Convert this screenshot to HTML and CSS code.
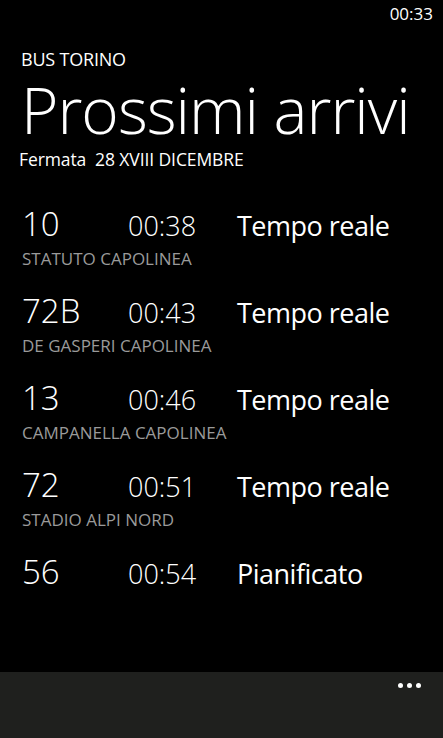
FILE: index.html
```html
<!DOCTYPE html>
<html lang="it">
<head>
  <meta charset="UTF-8" />
  <meta name="viewport" content="width=device-width, initial-scale=1.0" />
  <title>Bus Torino - Prossimi arrivi</title>
  <link rel="stylesheet" href="styles.css">
</head>
<body>
  <div class="phone">
    <!-- Status bar -->
    <div class="status-bar">
      <span class="clock">00:33</span>
    </div>

    <div class="page">
      <div class="header">
        <div class="app-name">BUS TORINO</div>
        <h1 class="page-title">Prossimi arrivi</h1>
        <div class="stop-name">Fermata&nbsp; 28 XVIII DICEMBRE</div>
      </div>

      <!-- Arrivals list -->
      <ul class="arrivals">
        <li class="arrival">
          <div class="arrival-line">
            <span class="line-number">10</span>
            <span class="arrival-time">00:38</span>
            <span class="arrival-kind">Tempo reale</span>
          </div>
          <div class="arrival-dest">STATUTO CAPOLINEA</div>
        </li>
        <li class="arrival">
          <div class="arrival-line">
            <span class="line-number">72B</span>
            <span class="arrival-time">00:43</span>
            <span class="arrival-kind">Tempo reale</span>
          </div>
          <div class="arrival-dest">DE GASPERI CAPOLINEA</div>
        </li>
        <li class="arrival">
          <div class="arrival-line">
            <span class="line-number">13</span>
            <span class="arrival-time">00:46</span>
            <span class="arrival-kind">Tempo reale</span>
          </div>
          <div class="arrival-dest">CAMPANELLA CAPOLINEA</div>
        </li>
        <li class="arrival">
          <div class="arrival-line">
            <span class="line-number">72</span>
            <span class="arrival-time">00:51</span>
            <span class="arrival-kind">Tempo reale</span>
          </div>
          <div class="arrival-dest">STADIO ALPI NORD</div>
        </li>
        <li class="arrival">
          <div class="arrival-line">
            <span class="line-number">56</span>
            <span class="arrival-time">00:54</span>
            <span class="arrival-kind">Pianificato</span>
          </div>
        </li>
      </ul>
    </div>

    <!-- Application bar -->
    <div class="app-bar">
      <div class="more">
        <span class="dot"></span>
        <span class="dot"></span>
        <span class="dot"></span>
      </div>
    </div>
  </div>
</body>
</html>
```

FILE: styles.css
```css
/* Global */
html, body {
  margin: 0;
  padding: 0;
  background: #000;
}

body {
  font-family: 'Open Sans', 'Noto Sans', sans-serif;
  color: #fff;
}

.phone {
  display: flex;
  flex-direction: column;
  height: 738px;
  overflow: hidden;
}

/* Status bar */
.status-bar {
  height: 28px;
  display: flex;
  justify-content: flex-end;
  align-items: center;
  padding-right: 10px;
}

.clock {
  font-size: 17px;
  line-height: 28px;
}

/* Page */
.page {
  flex: 1;
}

.header {
  padding-left: 21px;
  margin-top: 20px;
}

.app-name {
  font-size: 18px;
  line-height: 22px;
  letter-spacing: -0.2px;
}

.page-title {
  margin: 9px 0 0 0;
  font-size: 64px;
  font-weight: 300;
  line-height: 62px;
  letter-spacing: -1px;
}

.stop-name {
  margin-top: 7px;
  margin-left: -2px;
  font-size: 17.5px;
  line-height: 22px;
  letter-spacing: -0.1px;
}

/* Arrivals */
.arrivals {
  list-style: none;
  margin: 0;
  padding: 34px 0 0 22px;
}

.arrival {
  margin-bottom: 22px;
}

.arrival-line {
  display: grid;
  grid-template-columns: 106px 109px 1fr;
  align-items: baseline;
  line-height: 40px;
}

.line-number {
  font-size: 33px;
  font-weight: 300;
}

.arrival-time {
  font-size: 27px;
  font-weight: 300;
}

.arrival-kind {
  font-size: 27px;
  letter-spacing: -0.5px;
}

.arrival-dest {
  margin-top: 3px;
  font-size: 17px;
  line-height: 20px;
  color: #9a9a9a;
}

/* App bar */
.app-bar {
  height: 66px;
  background-color: #1f201e;
}

.more {
  display: flex;
  justify-content: flex-end;
  gap: 4px;
  padding: 11px 22px 0 0;
}

.dot {
  width: 5px;
  height: 5px;
  border-radius: 50%;
  background: #fff;
}
```
